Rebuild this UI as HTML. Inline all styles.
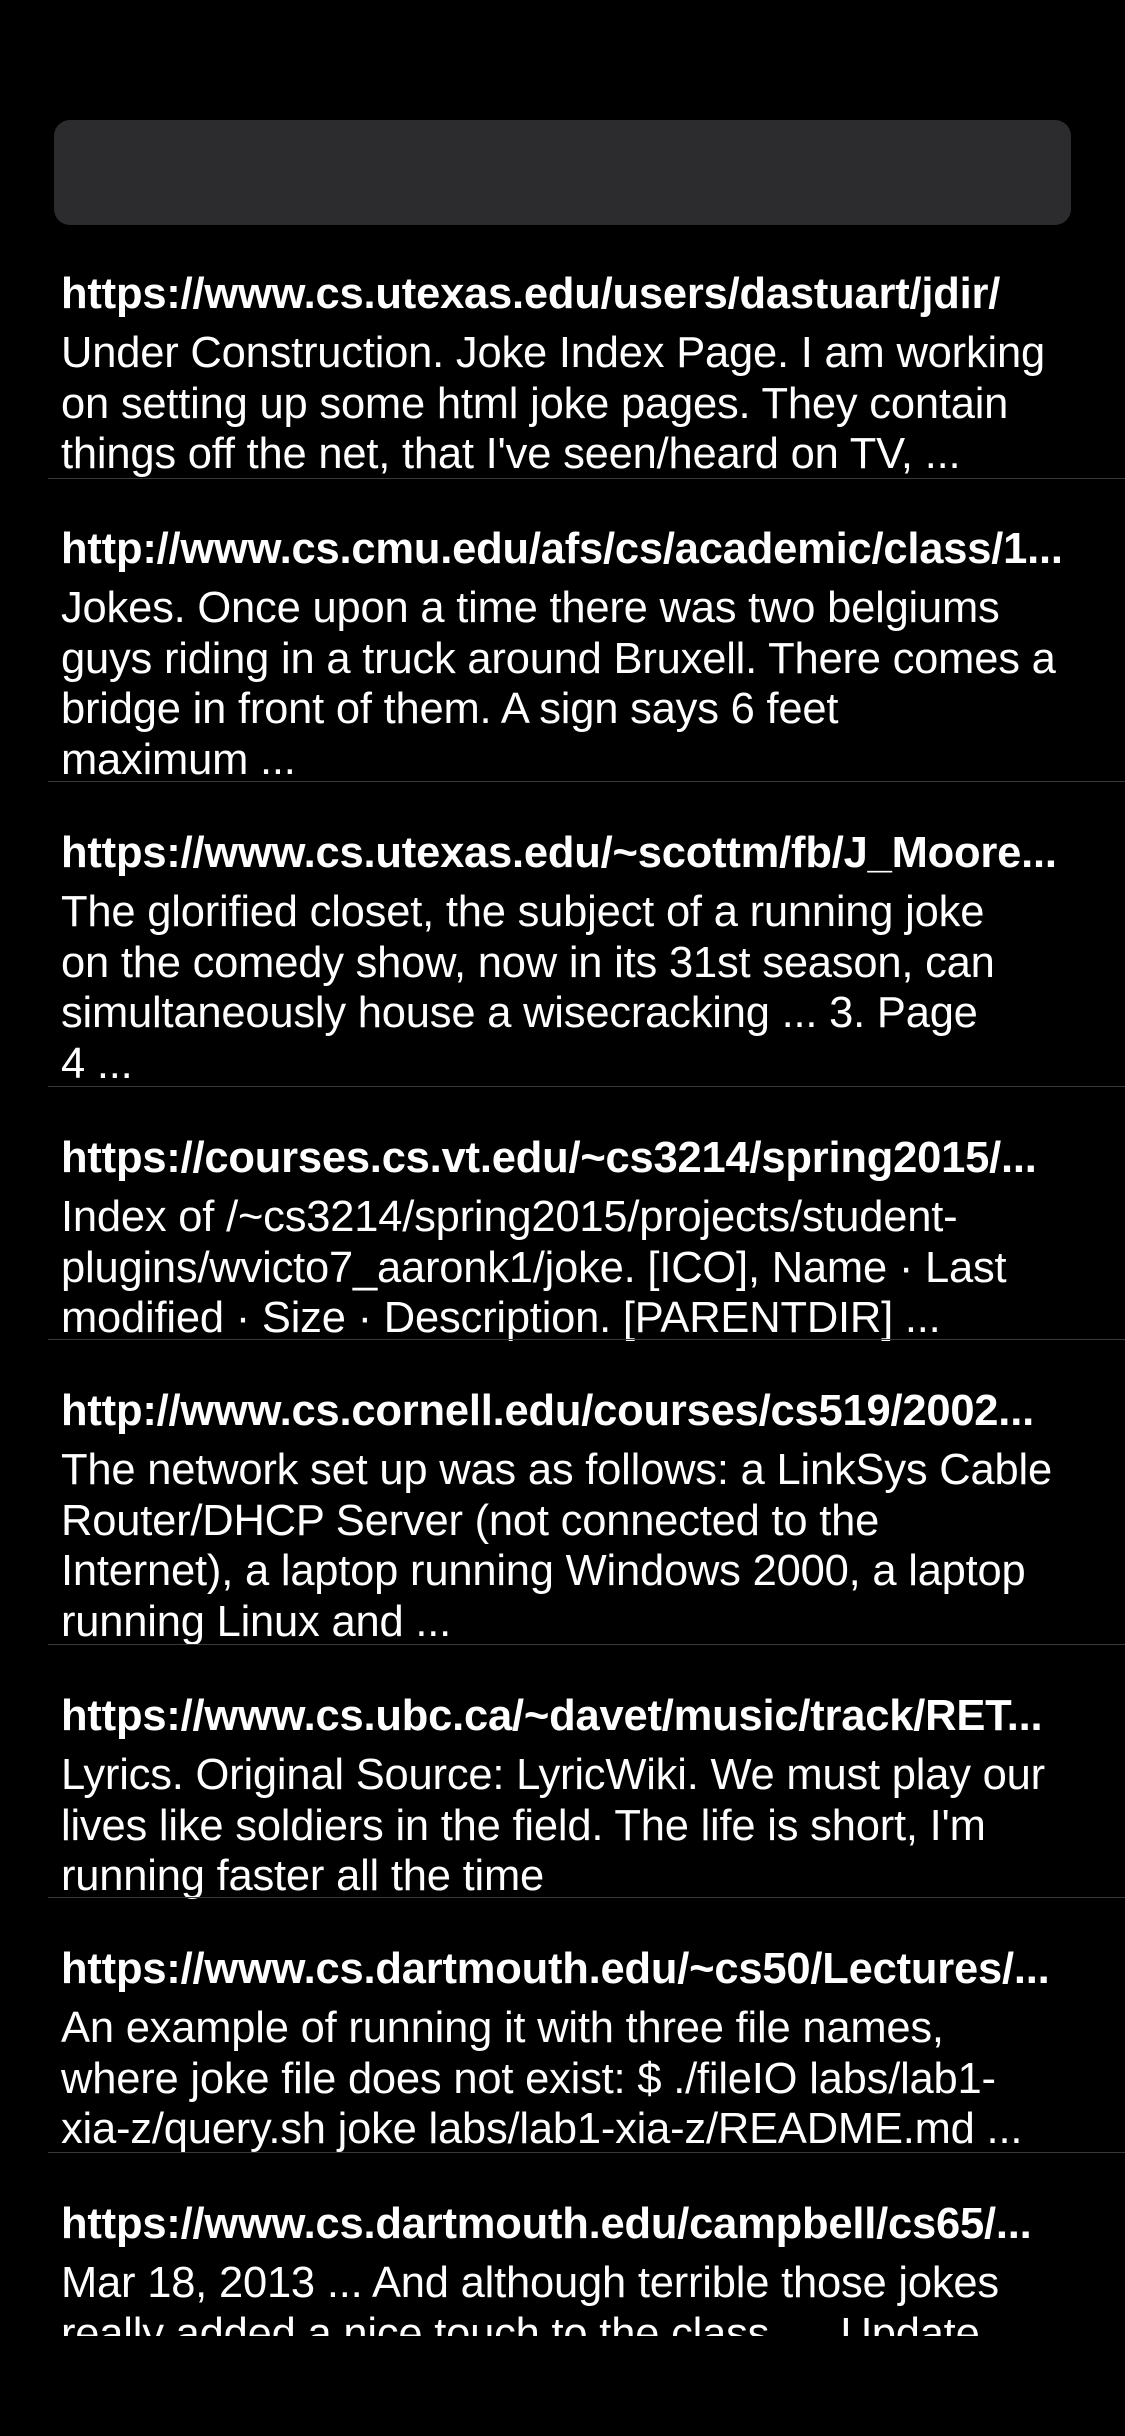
<!DOCTYPE html>
<html><head><meta charset="utf-8"><style>
html,body{margin:0;padding:0;background:#000;width:1125px;height:2436px;overflow:hidden;font-family:"Liberation Sans",sans-serif;color:#fff}
.search{position:absolute;left:54px;top:120px;width:1017px;height:105px;background:#2c2c2e;border-radius:16px}
.clip{position:absolute;left:0;top:0;width:1125px;height:2336px;overflow:hidden}
.it{position:absolute;left:61px;width:1010px}
.t{font-weight:bold;font-size:43.5px;line-height:50px;height:50px;white-space:nowrap;overflow:hidden;letter-spacing:-0.2px}
.b{font-size:43.5px;line-height:50.5px;margin-top:9px;white-space:nowrap;letter-spacing:-0.2px}
.sep{position:absolute;left:48px;right:0;height:1px;background:#3a3a3c}
</style></head><body>
<div class="search"></div>
<div class="clip">
<div class="it" style="top:269px"><div class="t">https://www.cs.utexas.edu/users/dastuart/jdir/</div><div class="b">Under Construction. Joke Index Page. I am working<br>on setting up some html joke pages. They contain<br>things off the net, that I've seen/heard on TV, ...</div></div>
<div class="sep" style="top:478px"></div>
<div class="it" style="top:524px"><div class="t">http://www.cs.cmu.edu/afs/cs/academic/class/1...</div><div class="b">Jokes. Once upon a time there was two belgiums<br>guys riding in a truck around Bruxell. There comes a<br>bridge in front of them. A sign says 6 feet<br>maximum ...</div></div>
<div class="sep" style="top:781px"></div>
<div class="it" style="top:828px"><div class="t">https://www.cs.utexas.edu/~scottm/fb/J_Moore...</div><div class="b">The glorified closet, the subject of a running joke<br>on the comedy show, now in its 31st season, can<br>simultaneously house a wisecracking ... 3. Page<br>4 ...</div></div>
<div class="sep" style="top:1086px"></div>
<div class="it" style="top:1133px"><div class="t">https://courses.cs.vt.edu/~cs3214/spring2015/...</div><div class="b">Index of /~cs3214/spring2015/projects/student-<br>plugins/wvicto7_aaronk1/joke. [ICO], Name · Last<br>modified · Size · Description. [PARENTDIR] ...</div></div>
<div class="sep" style="top:1339px"></div>
<div class="it" style="top:1386px"><div class="t">http://www.cs.cornell.edu/courses/cs519/2002...</div><div class="b">The network set up was as follows: a LinkSys Cable<br>Router/DHCP Server (not connected to the<br>Internet), a laptop running Windows 2000, a laptop<br>running Linux and ...</div></div>
<div class="sep" style="top:1644px"></div>
<div class="it" style="top:1691px"><div class="t">https://www.cs.ubc.ca/~davet/music/track/RET...</div><div class="b">Lyrics. Original Source: LyricWiki. We must play our<br>lives like soldiers in the field. The life is short, I'm<br>running faster all the time</div></div>
<div class="sep" style="top:1897px"></div>
<div class="it" style="top:1944px"><div class="t">https://www.cs.dartmouth.edu/~cs50/Lectures/...</div><div class="b">An example of running it with three file names,<br>where joke file does not exist: $ ./fileIO labs/lab1-<br>xia-z/query.sh joke labs/lab1-xia-z/README.md ...</div></div>
<div class="sep" style="top:2152px"></div>
<div class="it" style="top:2199px"><div class="t">https://www.cs.dartmouth.edu/campbell/cs65/...</div><div class="b">Mar 18, 2013 ... And although terrible those jokes<br>really added a nice touch to the class. ... Update</div></div>
</div>
</body></html>
